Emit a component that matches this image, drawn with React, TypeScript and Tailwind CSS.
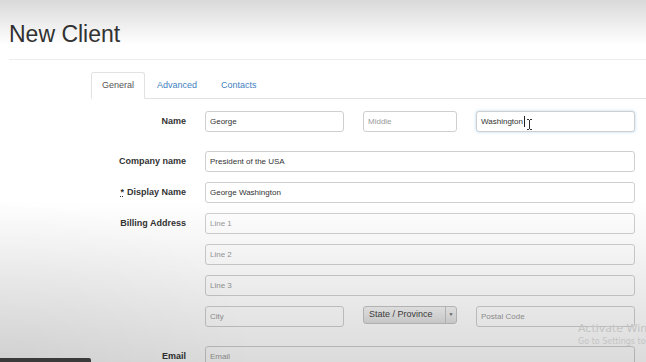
import { useState } from 'react';

const inputBase =
  "block h-[21px] w-full rounded-[3px] border border-[#cfcfcf] bg-white px-[4px] text-[8px] text-[#333] placeholder:text-[#9a9a9a] outline-none";

function Field({ label, required, children, className = "" }: { label?: string; required?: boolean; children: React.ReactNode; className?: string }) {
  return (
    <div className={"grid grid-cols-[177px_1fr] gap-x-[19px] " + className}>
      <div className="flex h-[21px] items-center justify-end text-[9px] font-bold text-[#333]">
        {required && <span className="mr-[3px] underline decoration-dotted">*</span>}
        {label}
      </div>
      <div className="flex flex-col gap-[10px]">{children}</div>
    </div>
  );
}

export default function App() {
  const [tab, setTab] = useState("General");
  const tabs = ["General", "Advanced", "Contacts"];

  return (
    <div className="relative h-[362px] w-[646px] overflow-hidden bg-white font-['Liberation_Sans',Arial,sans-serif]">
      <div className="px-[9px] pt-[20px]">
        <h1 className="text-[23px] leading-[28px] text-[#333]">New Client</h1>
        <div className="mt-[11px] mr-[-9px] h-px bg-[#ececec]" />

        {/* Tabs */}
        <div className="mt-[12px] ml-[82px] mr-[-9px] flex border-b border-[#e2e2e2]">
          {tabs.map((t) => (
            <button
              key={t}
              onClick={() => setTab(t)}
              className={
                "-mb-px h-[27px] px-[10px] text-[9px] " +
                (tab === t
                  ? "rounded-t-[3px] border border-[#e2e2e2] border-b-white bg-white text-[#555]"
                  : "border border-transparent px-[11px] text-[#3f7fc0]")
              }
            >
              {t}
            </button>
          ))}
        </div>

        {/* Form */}
        <div className="mt-[12px] mr-[2px] flex flex-col">
          <Field label="Name" className="mb-[19px]">
            <div className="grid grid-cols-[139px_94px_1fr] gap-x-[19px]">
              <input className={inputBase} defaultValue="George" />
              <input className={inputBase} placeholder="Middle" />
              <div className="relative h-[21px]">
                <input
                  className={inputBase + " border-[#a9c9ec] shadow-[0_0_3px_rgba(102,175,233,0.5)]"}
                  defaultValue="Washington"
                />
                <span className="absolute left-[48px] top-[5px] h-[11px] w-px bg-[#222]" />
              </div>
            </div>
          </Field>

          <Field label="Company name" className="mb-[10px]">
            <input className={inputBase} defaultValue="President of the USA" />
          </Field>

          <Field label="Display Name" required className="mb-[10px]">
            <input className={inputBase} defaultValue="George Washington" />
          </Field>

          <Field label="Billing Address" className="mb-[19px]">
            <input className={inputBase} placeholder="Line 1" />
            <input className={inputBase} placeholder="Line 2" />
            <input className={inputBase} placeholder="Line 3" />
            <div className="grid grid-cols-[139px_94px_1fr] gap-x-[19px]">
              <input className={inputBase} placeholder="City" />
              <div className="flex h-[18px] overflow-hidden rounded-[3px] border border-[#c4c4c4] bg-gradient-to-b from-[#f4f4f4] to-[#dedede]">
                <span className="flex flex-1 items-center pl-[5px] text-[9px] text-[#444]">State / Province</span>
                <span className="flex w-[11px] items-center justify-center border-l border-[#c4c4c4] text-[5px] text-[#666]">▼</span>
              </div>
              <input className={inputBase} placeholder="Postal Code" />
            </div>
          </Field>

          <Field label="Email">
            <input className={inputBase} placeholder="Email" />
          </Field>
        </div>
      </div>

      {/* video vignette */}
      <div className="pointer-events-none absolute inset-0 bg-[linear-gradient(to_bottom,rgba(0,0,0,0.15)_0px,rgba(0,0,0,0)_45px,rgba(0,0,0,0)_200px,rgba(0,0,0,0.14)_362px)]" />
      <div className="pointer-events-none absolute inset-0 bg-[radial-gradient(ellipse_40%_45%_at_0%_100%,rgba(0,0,0,0.05)_0%,rgba(0,0,0,0)_100%)]" />

      {/* text cursor */}
      <svg className="pointer-events-none absolute left-[526px] top-[119px]" width="7" height="11" viewBox="0 0 7 11">
        <path d="M1 0.5h2M4 0.5h2M3.5 1v9M1 10.5h2M4 10.5h2" stroke="#333" strokeWidth="1" fill="none" />
      </svg>

      {/* watermark */}
      <div className="pointer-events-none absolute left-[578px] top-[322px] whitespace-nowrap font-['DejaVu_Sans',sans-serif] text-[#c4c4c4]">
        <div className="text-[11px] leading-[14px]">Activate Windows</div>
        <div className="text-[8px] leading-[11px]">Go to Settings to activate Windows.</div>
      </div>

      {/* player progress bar */}
      <div className="absolute bottom-0 left-0 h-[4px] w-[91px] rounded-tr-[2px] bg-[#3a3a3a]" />
    </div>
  );
}
